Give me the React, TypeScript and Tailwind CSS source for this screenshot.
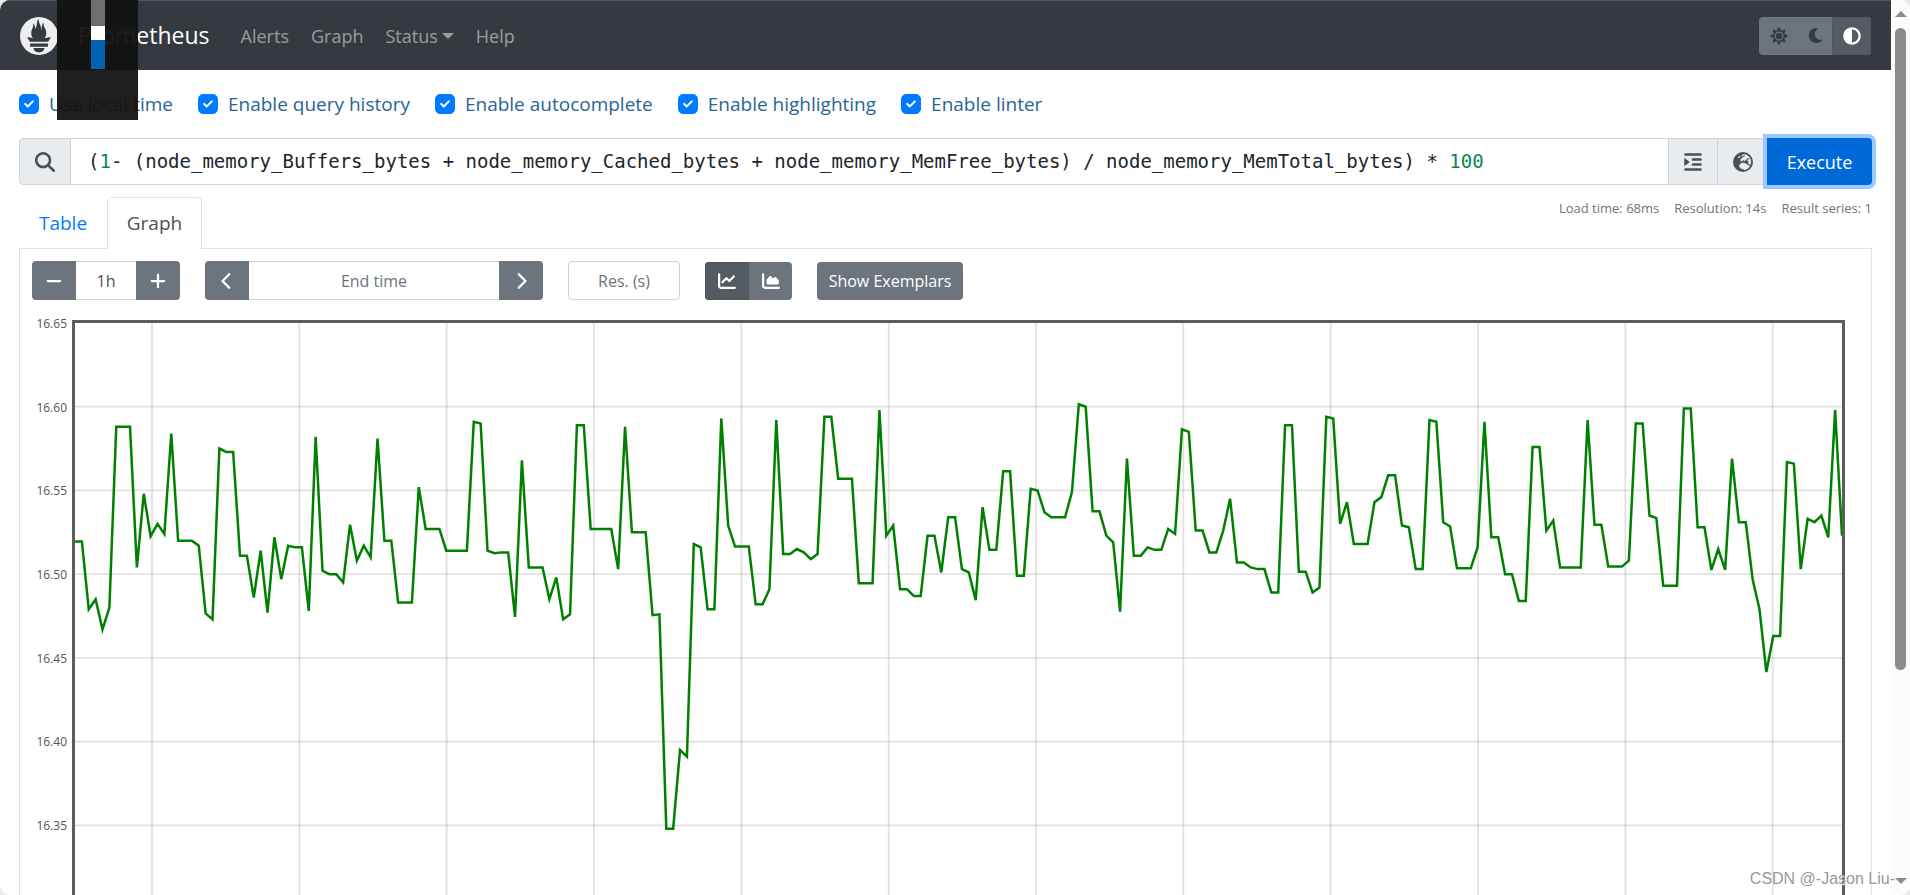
import React, { useState } from 'react';
import {
  FaChartArea,
  FaChartLine,
  FaChevronLeft,
  FaChevronRight,
  FaEarthEurope,
  FaIndent,
  FaMagnifyingGlass,
  FaMinus,
  FaPlus,
} from 'react-icons/fa6';
import { FaAdjust, FaCheck, FaMoon, FaSun } from 'react-icons/fa';
import { SiPrometheus } from 'react-icons/si';

const QUERY = "(1- (node_memory_Buffers_bytes + node_memory_Cached_bytes + node_memory_MemFree_bytes) / node_memory_MemTotal_bytes) * 100";

// one sample every 14s, thousandths of a percent above 16
const SAMPLES = [
  519.5, 519.5, 479, 485, 467, 480, 588, 588, 588, 504, 548, 522.6, 530, 524, 584, 520, 520, 520, 517, 476.5,
  473, 575, 573, 573, 511, 511, 486, 514, 477, 522, 497, 517, 516, 516, 478, 582, 502, 500, 500, 495,
  529.5, 508, 517, 510, 581, 520, 520, 483, 483, 483, 552, 527, 527, 527, 514, 514, 514, 514, 591, 590,
  514, 512.5, 513, 513, 474.5, 568, 504, 504, 504, 485, 498, 473, 476, 589, 589, 527, 527, 527, 527, 503,
  588, 525, 525, 525, 475.5, 476, 348, 348, 395, 391, 518, 516, 479, 479, 593, 529, 516.5, 516.5, 516.5, 482,
  482, 491, 592, 512, 512, 515, 513, 509, 512, 594, 594, 557, 557, 557, 494.5, 494.5, 494.5, 598, 523, 529,
  491, 491, 487, 487, 523, 523, 501, 534, 534, 503, 501, 484.5, 540, 514.5, 514.5, 561.5, 561.5, 499, 499, 551,
  550, 537, 534, 534, 534, 549, 601.5, 600, 537.5, 537.5, 523, 519, 477.6, 569, 511, 511, 516, 514.5, 514.5, 527,
  524, 586.5, 585, 526, 526, 513, 513, 526, 545, 507, 507, 504, 503, 503, 489, 489, 589, 589, 501.5, 501.5,
  489, 492, 594, 593, 530, 543, 518, 518, 518, 543, 546, 559, 559, 529, 528, 503, 503, 592, 591, 531,
  528.5, 503.5, 503.5, 503.5, 516, 591, 522, 522, 500, 500, 484, 484, 576, 576, 526, 532, 504, 504, 504, 504,
  592, 529.5, 529.5, 504.5, 504.5, 504.5, 508, 590, 590, 535, 533.5, 493, 493, 493, 599, 599, 528, 528, 502.5, 515,
  502.5, 569, 531, 531, 497, 479, 441.5, 463, 463, 567, 566, 503, 533, 531, 535, 522, 598, 523,
];

const Y_MAX = 650;
const Y_RANGE = 350;
const Y_TICKS = ["16.65", "16.60", "16.55", "16.50", "16.45", "16.40", "16.35"];
// five minute ticks, in sample units
const X_TICKS = Array(12).fill(0).map((_, i) => 11.2 + (i * 300) / 14);

const OPTIONS = [
  "Use local time",
  "Enable query history",
  "Enable autocomplete",
  "Enable highlighting",
  "Enable linter",
];

function NavBar() {
  const [theme, setTheme] = useState("auto");

  const themes = [
    { name: "light", icon: <FaSun size={18} />, width: "w-10" },
    { name: "dark", icon: <FaMoon size={15} />, width: "w-[33px]" },
    { name: "auto", icon: <FaAdjust size={18} />, width: "w-[39px]" },
  ];

  return (
    <nav className="flex h-[70px] items-center border-t border-[#50565b] bg-[#343a40] px-5">
      <SiPrometheus className="size-[38px] shrink-0 text-[#eeeeee]" />
      <a href="#" className="ml-5 text-[23px] text-white">Prometheus</a>
      <div className="ml-[31px] flex items-center gap-[22px] text-lg text-white/50">
        <a href="#alerts">Alerts</a>
        <a href="#graph">Graph</a>
        <button type="button" className="flex items-center gap-1">
          Status
          <span className="border-x-6 border-t-6 border-x-transparent border-t-white/50" />
        </button>
        <a href="#help">Help</a>
      </div>
      <div className="ml-auto flex h-[38px] overflow-hidden rounded bg-[#6c757d]">
        {themes.map((t) => (
          <button
            key={t.name}
            type="button"
            aria-label={t.name + " theme"}
            onClick={() => setTheme(t.name)}
            className={"flex items-center justify-center " + t.width + (theme === t.name
              ? " border border-[#4e555b] bg-[#545b62] text-white"
              : " text-[#343a40]")}
          >
            {t.icon}
          </button>
        ))}
      </div>
    </nav>
  );
}

function Option({ label }: { label: string }) {
  const [checked, setChecked] = useState(true);

  return (
    <label className="flex items-center gap-[10px]">
      <span className="grid size-5 place-items-center">
        <input
          type="checkbox"
          checked={checked}
          onChange={(e) => setChecked(e.target.checked)}
          className="col-start-1 row-start-1 size-5 appearance-none rounded-[5px] border border-[#adb5bd] checked:border-[#007bff] checked:bg-[#007bff]"
        />
        {checked && <FaCheck size={10} className="pointer-events-none col-start-1 row-start-1 text-white" />}
      </span>
      {label}
    </label>
  );
}

function ExpressionInput() {
  const [query, setQuery] = useState(QUERY);

  return (
    <div className="flex h-[47px]">
      <span className="flex w-[52px] shrink-0 items-center justify-center rounded-l border border-[#ced4da] bg-[#e9ecef] text-[#495057]">
        <FaMagnifyingGlass size={20} />
      </span>
      <div className="grid min-w-0 flex-1 items-center overflow-hidden border-y border-[#ced4da] font-['DejaVu_Sans_Mono',monospace] text-[19px] whitespace-pre">
        {/* coloured copy sits under the real input */}
        <div aria-hidden="true" className="col-start-1 row-start-1 px-[17px] text-[#212529]">
          {query.split(/(\b\d+\b)/).map((part, i) => (
            <span key={i} className={i % 2 ? "text-[#098658]" : ""}>{part}</span>
          ))}
        </div>
        <input
          type="text"
          aria-label="Expression"
          value={query}
          onChange={(e) => setQuery(e.target.value)}
          className="col-start-1 row-start-1 w-full px-[17px] text-transparent caret-black outline-none"
        />
      </div>
      <button type="button" aria-label="Format expression" className="flex w-[49px] items-center justify-center border border-r-0 border-[#ced4da] bg-[#e9ecef] text-[#495057]">
        <FaIndent size={20} />
      </button>
      <button type="button" aria-label="Open metrics explorer" className="flex w-[50px] items-center justify-center border border-r-0 border-[#ced4da] bg-[#e9ecef] text-[#495057]">
        <FaEarthEurope size={20} />
      </button>
      <button type="button" className="w-[105px] rounded-r bg-[#0069d9] text-lg text-white ring-4 ring-[#99caff]">
        Execute
      </button>
    </div>
  );
}

function GraphControls() {
  const [range, setRange] = useState("1h");
  const [endTime, setEndTime] = useState("");
  const [resolution, setResolution] = useState("");
  const [stacked, setStacked] = useState(false);

  const square = "flex w-11 items-center justify-center bg-[#6c757d] text-white";
  const field = "h-[39px] border-[#ced4da] text-center text-[#495057] placeholder:text-[#6c757d] outline-none";

  return (
    <div className="flex items-end gap-[25px] text-base">
      <div className="flex">
        <button type="button" aria-label="Decrease range" className={square + " rounded-l"}><FaMinus size={18} /></button>
        <input aria-label="Range" value={range} onChange={(e) => setRange(e.target.value)} className={field + " w-[60px] border-y"} />
        <button type="button" aria-label="Increase range" className={square + " rounded-r"}><FaPlus size={18} /></button>
      </div>
      <div className="flex">
        <button type="button" aria-label="Decrease end time" className={square + " rounded-l"}><FaChevronLeft size={18} /></button>
        <input aria-label="End time" placeholder="End time" value={endTime} onChange={(e) => setEndTime(e.target.value)} className={field + " w-[250px] border-y"} />
        <button type="button" aria-label="Increase end time" className={square + " rounded-r"}><FaChevronRight size={18} /></button>
      </div>
      <input aria-label="Resolution" placeholder="Res. (s)" value={resolution} onChange={(e) => setResolution(e.target.value)} className={field + " w-28 rounded border"} />
      <div className="flex h-[38px] overflow-hidden rounded text-white">
        <button
          type="button"
          aria-label="Show unstacked line graph"
          onClick={() => setStacked(false)}
          className={"flex w-11 items-center justify-center " + (stacked ? "bg-[#6c757d]" : "border border-[#4e555b] bg-[#545b62]")}
        >
          <FaChartLine size={18} />
        </button>
        <button
          type="button"
          aria-label="Show stacked graph"
          onClick={() => setStacked(true)}
          className={"flex w-[43px] items-center justify-center " + (stacked ? "border border-[#4e555b] bg-[#545b62]" : "bg-[#6c757d]")}
        >
          <FaChartArea size={18} />
        </button>
      </div>
      <button type="button" className="h-[38px] w-[146px] rounded bg-[#6c757d] text-white">Show Exemplars</button>
    </div>
  );
}

function Graph() {
  const last = SAMPLES.length - 1;
  const points = SAMPLES.map((v, i) => i + "," + (Y_MAX - v)).join(" ");

  return (
    <div className="mt-5 mr-[26px] flex">
      <div className="-mt-1 flex h-[518px] w-[40px] shrink-0 flex-col justify-between pr-[5px] text-right text-xs leading-4 text-[#545454]">
        {Y_TICKS.map((t) => <span key={t}>{t}</span>)}
      </div>
      <div className="min-w-0 flex-1 border-[3px] border-[#5c5c5c]">
        <svg viewBox={`0 0 ${last} ${Y_RANGE}`} preserveAspectRatio="none" className="block h-[586px] w-full">
          <g stroke="#545454" strokeOpacity="0.17" strokeWidth="1.8">
            {X_TICKS.map((x) => <line key={x} x1={x} x2={x} y1="0" y2={Y_RANGE} vectorEffect="non-scaling-stroke" />)}
            {Y_TICKS.slice(1).map((t, i) => (
              <line key={t} x1="0" x2={last} y1={(i + 1) * 50} y2={(i + 1) * 50} vectorEffect="non-scaling-stroke" />
            ))}
          </g>
          <polyline points={points} fill="none" stroke="#008000" strokeWidth="2.5" vectorEffect="non-scaling-stroke" />
        </svg>
      </div>
    </div>
  );
}

function ScrollBar() {
  return (
    <div className="flex w-[19px] shrink-0 flex-col items-center bg-[#fcfcfc] py-[11px]">
      <span className="border-x-6 border-b-6 border-x-transparent border-b-[#8b8b8b]" />
      <span className="mt-[11px] h-[642px] w-[11px] rounded-full bg-[#8b8b8b]" />
      <span className="mt-auto border-x-6 border-t-6 border-x-transparent border-t-[#8b8b8b]" />
    </div>
  );
}

export default function App() {
  return (
    <div className="h-screen bg-[#e8ebee] font-['Open_Sans',sans-serif]">
      <div className="relative flex h-full overflow-hidden rounded-[10px] bg-white">
        <main className="min-w-0 flex-1">
          <NavBar />
          <div className="px-[19px]">
            <div className="mt-5 flex gap-[25px] text-[19px] leading-7 text-[#2a6496]">
              {OPTIONS.map((label) => <Option key={label} label={label} />)}
            </div>
            <div className="mt-5">
              <ExpressionInput />
            </div>
            <div className="mt-3 flex items-start">
              <div role="tablist" className="z-10 -mb-px flex h-[52px] text-[19px]">
                <button type="button" role="tab" className="w-[88px] text-[#007bff]">Table</button>
                <button type="button" role="tab" aria-selected="true" className="w-[95px] rounded-t-[5px] border border-b-0 border-[#dee2e6] bg-white text-[#495057]">Graph</button>
              </div>
              <div className="ml-auto flex gap-[15px] text-[13px] leading-[22px] text-[#6c757d]">
                <span>Load time: 68ms</span>
                <span>Resolution: 14s</span>
                <span>Result series: 1</span>
              </div>
            </div>
            <div className="border border-[#dee2e6] pt-3 pb-5 pl-3">
              <GraphControls />
              <Graph />
            </div>
          </div>
        </main>
        <ScrollBar />

        {/* picker preview floating over the header */}
        <div className="absolute top-0 left-[57px] flex h-[120px] w-[81px] justify-center bg-[#121212]/95">
          <div className="flex w-[14px] flex-col">
            <span className="h-[26px] bg-[#6f6f6f]" />
            <span className="h-[14px] bg-white" />
            <span className="h-[29px] bg-[#0063b1]" />
          </div>
        </div>
        <div className="absolute right-[15px] bottom-1 font-['Liberation_Sans',sans-serif] text-base text-[#999999] [text-shadow:1px_1px_1px_#ffffff]">
          CSDN @-Jason Liu-
        </div>
      </div>
    </div>
  );
}
